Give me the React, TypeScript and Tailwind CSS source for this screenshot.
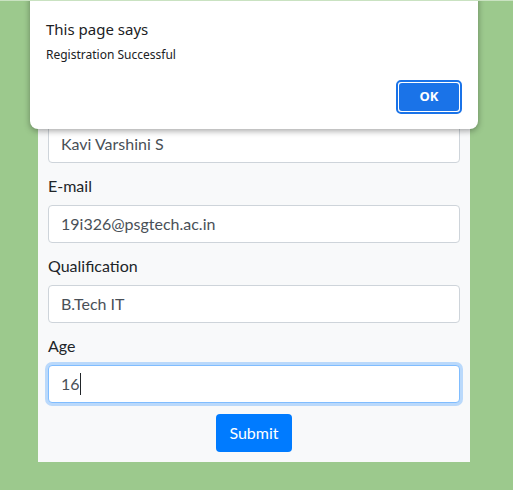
import React from "react";

const font = { fontFamily: "Lato, 'Noto Sans', sans-serif" };

function Field({ label, value, focused }: { label: string; value: string; focused?: boolean }) {
    return (
        <div className="mt-[11px] flex flex-col">
            <label className="h-6 text-base leading-6 text-[#212529]">{label}</label>
            <div
                className={
                    focused
                        ? "mt-[7px] flex h-[38px] items-center rounded border border-[#80bdff] bg-white px-3 text-base text-[#495057] shadow-[0_0_0_3px_rgba(0,123,255,0.25)]"
                        : "mt-[7px] flex h-[38px] items-center rounded border border-[#ced4da] bg-white px-3 text-base text-[#495057]"
                }
            >
                {value}
                {focused && <span className="h-[22px] w-px bg-[#212529]" />}
            </div>
        </div>
    );
}

export default function App() {
    return (
        <div className="relative h-[490px] w-[513px] overflow-hidden border-t border-[#c9e2c1] bg-[#9cc98d]" style={font}>
            <div className="ml-[38px] flex h-[461px] w-[432px] flex-col bg-[#f8f9fa] px-[10px] pt-[10px]">
                {/* top of the form sits under the alert */}
                <div className="h-[72px]" />
                <Field label="Name" value="Kavi Varshini S" />
                <Field label="E-mail" value="19i326@psgtech.ac.in" />
                <Field label="Qualification" value="B.Tech IT" />
                <Field label="Age" value="16" focused />
                <div className="mt-[11px] flex justify-center">
                    <button className="h-[38px] w-[76px] rounded bg-[#007bff] text-base text-white">Submit</button>
                </div>
            </div>

            {/* alert dialog */}
            <div
                className="absolute left-[30px] top-[-12px] flex h-[140px] w-[448px] flex-col rounded-lg bg-white px-4 pt-[30px] shadow-[0_2px_6px_rgba(0,0,0,0.35)]"
                style={{ fontFamily: "'Noto Sans', sans-serif" }}
            >
                <div className="text-[15px] leading-5 text-[#202124]">This page says</div>
                <div className="mt-[8px] text-[12px] leading-4 text-[#202124]">Registration Successful</div>
                <div className="mt-auto mb-[15px] flex justify-end">
                    <button className="flex h-[34px] w-[66px] items-center justify-center rounded-[5px] border-2 border-[#1a73e8] bg-white p-px">
                        <span className="flex h-full w-full items-center justify-center rounded-[3px] bg-[#1a73e8] text-[13px] font-bold text-white">
                            OK
                        </span>
                    </button>
                </div>
            </div>
        </div>
    );
}
